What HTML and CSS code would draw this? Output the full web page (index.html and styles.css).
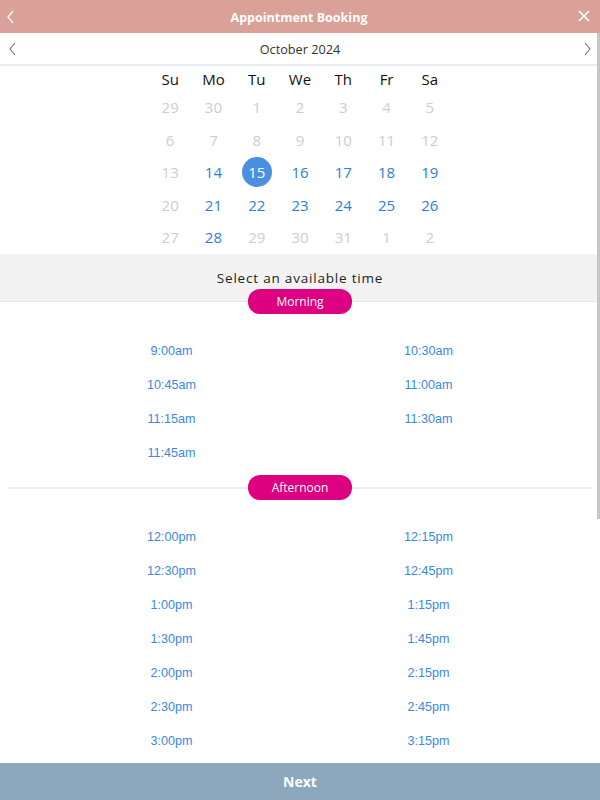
FILE: index.html
```html
<!DOCTYPE html>
<html>
<head>
<meta charset="utf-8">
<link rel="stylesheet" href="styles.css">
</head>
<body>
<div class="app">
  <header class="header">
    <svg class="hdr-back" width="10" height="14" viewBox="0 0 10 14"><path d="M7 1 L2 7 L7 13" fill="none" stroke="#fff" stroke-width="1.3"/></svg>
    <span class="title">Appointment Booking</span>
    <svg class="hdr-close" width="14" height="14" viewBox="0 0 14 14"><path d="M2 2 L12 12 M12 2 L2 12" fill="none" stroke="#fff" stroke-width="1.5"/></svg>
  </header>
  <div class="month">
    <svg class="nav prev" width="10" height="14" viewBox="0 0 10 14"><path d="M7 1 L2 7 L7 13" fill="none" stroke="#6d767c" stroke-width="1.1"/></svg>
    <span class="month-label">October 2024</span>
    <svg class="nav next" width="10" height="14" viewBox="0 0 10 14"><path d="M3 1 L8 7 L3 13" fill="none" stroke="#6d767c" stroke-width="1.1"/></svg>
  </div>
  <div class="calendar">
    <div class="dow">Su</div><div class="dow">Mo</div><div class="dow">Tu</div><div class="dow">We</div><div class="dow">Th</div><div class="dow">Fr</div><div class="dow">Sa</div>
    <div class="d off">29</div><div class="d off">30</div><div class="d off">1</div><div class="d off">2</div><div class="d off">3</div><div class="d off">4</div><div class="d off">5</div>
    <div class="d off">6</div><div class="d off">7</div><div class="d off">8</div><div class="d off">9</div><div class="d off">10</div><div class="d off">11</div><div class="d off">12</div>
    <div class="d off">13</div><div class="d on">14</div><div class="d sel"><span>15</span></div><div class="d on">16</div><div class="d on">17</div><div class="d on">18</div><div class="d on">19</div>
    <div class="d off">20</div><div class="d on">21</div><div class="d on">22</div><div class="d on">23</div><div class="d on">24</div><div class="d on">25</div><div class="d on">26</div>
    <div class="d off">27</div><div class="d on">28</div><div class="d off">29</div><div class="d off">30</div><div class="d off">31</div><div class="d off">1</div><div class="d off">2</div>
  </div>
  <div class="select-bar">Select an available time</div>
  <div class="pill-row"><span class="pill">Morning</span></div>
  <div class="slots morning">
    <div class="t">9:00am</div><div class="t">10:30am</div>
    <div class="t">10:45am</div><div class="t">11:00am</div>
    <div class="t">11:15am</div><div class="t">11:30am</div>
    <div class="t">11:45am</div><div class="t"></div>
  </div>
  <div class="divider"><span class="pill">Afternoon</span></div>
  <div class="slots">
    <div class="t">12:00pm</div><div class="t">12:15pm</div>
    <div class="t">12:30pm</div><div class="t">12:45pm</div>
    <div class="t">1:00pm</div><div class="t">1:15pm</div>
    <div class="t">1:30pm</div><div class="t">1:45pm</div>
    <div class="t">2:00pm</div><div class="t">2:15pm</div>
    <div class="t">2:30pm</div><div class="t">2:45pm</div>
    <div class="t">3:00pm</div><div class="t">3:15pm</div>
  </div>
  <div class="footer">Next</div>
  <div class="scrollbar"></div>
</div>
</body>
</html>
```
FILE: styles.css
```css
html, body {
  margin: 0;
  padding: 0;
}
body {
  width: 600px;
  height: 800px;
  overflow: hidden;
  background: #fff;
  font-family: "Open Sans", "Noto Sans", sans-serif;
}
.app {
  position: relative;
  width: 600px;
  height: 800px;
  display: flex;
  flex-direction: column;
}
.header {
  height: 33px;
  flex: none;
  background: #d9a198;
  display: grid;
  grid-template-columns: 1fr auto 1fr;
  align-items: center;
  padding: 0 9px 0 6px;
  box-sizing: border-box;
}
.hdr-close { justify-self: end; margin-top: -1px; }
.title {
  color: #fff;
  font-weight: 700;
  font-size: 12.5px;
  padding-left: 1px;
  padding-top: 1px;
}
.month {
  flex: none;
  height: 33px;
  display: grid;
  grid-template-columns: 1fr auto 1fr;
  align-items: center;
  padding: 0 8px;
  border-bottom: 2px solid #e9edef;
  box-sizing: border-box;
}
.month .next { justify-self: end; }
.month-label {
  font-size: 12.7px;
  color: #333;
}
.calendar {
  width: 303px;
  margin: 0 auto;
  display: grid;
  grid-template-columns: repeat(7, 1fr);
  grid-template-rows: 25px repeat(5, 32.5px);
  flex: none;
}
.dow, .d {
  display: flex;
  align-items: center;
  justify-content: center;
  font-size: 15px;
}
.dow { color: #111; }
.d.off { color: #c9ced2; }
.d.on { color: #2c7fd8; }
.d.sel span {
  width: 30px;
  height: 30px;
  border-radius: 50%;
  background: #4a8fe0;
  color: #fff;
  display: flex;
  align-items: center;
  justify-content: center;
}
.select-bar {
  flex: none;
  height: 48px;
  background: #f2f2f2;
  border-bottom: 1px solid #e4e7e9;
  display: flex;
  align-items: center;
  justify-content: center;
  font-size: 13.5px;
  letter-spacing: 0.8px;
  color: #222;
  padding-top: 2px;
  box-sizing: border-box;
}
.pill-row {
  flex: none;
  display: flex;
  justify-content: center;
  margin-top: -13px;
  position: relative;
}
.pill {
  width: 104px;
  height: 25px;
  border-radius: 12px;
  background: #dd0081;
  color: #fff;
  font-size: 12px;
  display: flex;
  align-items: center;
  justify-content: center;
}
.slots {
  flex: none;
  display: grid;
  grid-template-columns: 1fr 1fr;
  grid-auto-rows: 34px;
  padding: 20px 43px 19px;
}
.slots.morning { padding-bottom: 5.5px; }
.t {
  display: flex;
  align-items: center;
  justify-content: center;
  font-family: "Liberation Sans", Arial, sans-serif;
  font-size: 12.6px;
  color: #3b88e0;
}
.divider {
  flex: none;
  margin: 0 8px;
  height: 25px;
  display: flex;
  align-items: center;
}
.divider::before, .divider::after {
  content: "";
  flex: 1;
  height: 2px;
  background: #eaeef0;
}
.footer {
  position: absolute;
  left: 0;
  right: 0;
  bottom: 0;
  height: 37px;
  background: #8da7bd;
  color: #fff;
  font-weight: 700;
  font-size: 14px;
  display: flex;
  align-items: center;
  justify-content: center;
}
.scrollbar {
  position: absolute;
  left: 597px;
  top: 33px;
  width: 3px;
  height: 486px;
  background: #c6c6c6;
}
```
